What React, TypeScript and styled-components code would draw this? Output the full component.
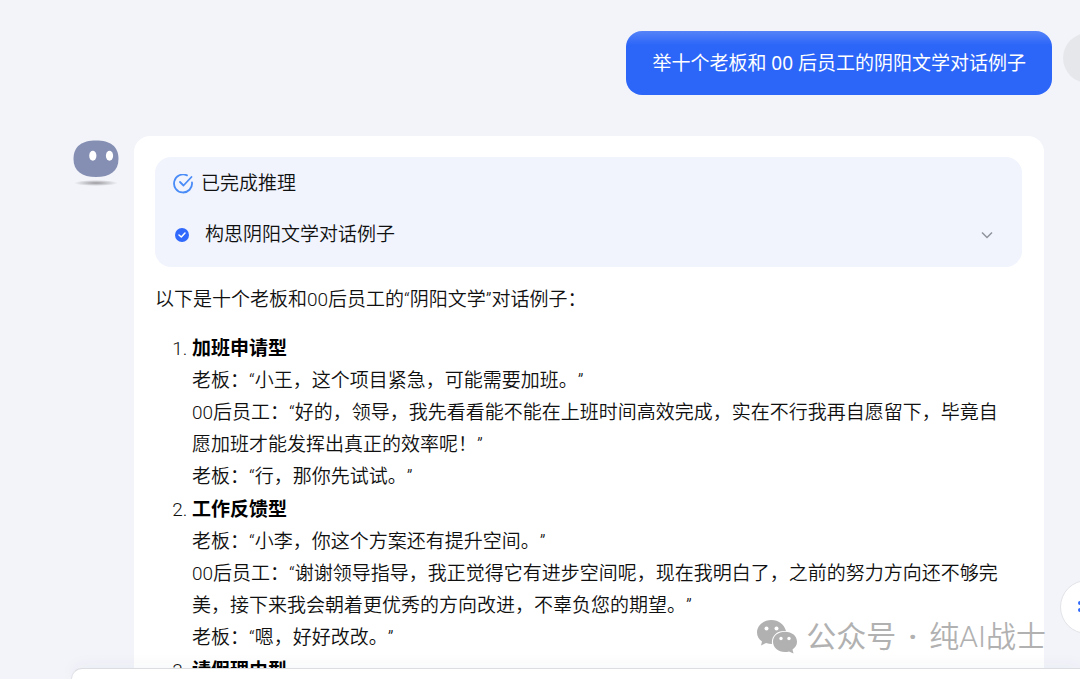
import React from "react";
import styled, { createGlobalStyle } from "styled-components";

const Global = createGlobalStyle`
  * { box-sizing: border-box; }
  body {
    margin: 0;
    background: #f3f4fa;
    color: #101010;
    font-family: Roboto, "Noto Sans CJK SC", sans-serif;
    font-size: 19px;
    font-weight: 350;
    line-height: 32px;
    text-spacing-trim: space-all;
  }
`;

const Page = styled.div`
  position: relative;
  display: flex;
  flex-direction: column;
  height: 100vh;
  overflow: hidden;
`;

const Conversation = styled.main`
  flex: 1;
  min-height: 0;
  overflow: hidden;
  display: flex;
  flex-direction: column;
  gap: 41px;
  padding-top: 31px;
`;

const UserRow = styled.div`
  display: flex;
  flex: none;
  justify-content: flex-end;
  gap: 11px;
  margin-right: -33px;
`;

const UserBubble = styled.div`
  padding: 16px 26px;
  border-radius: 16px;
  background: linear-gradient(#5583f8, #2c66f8 14px);
  color: #fff;
  font-family: "Noto Sans", "Noto Sans CJK SC", sans-serif;
  font-weight: 400;
`;

const UserAvatar = styled.div`
  width: 50px;
  height: 50px;
  margin-top: 2px;
  border-radius: 50%;
  background: #e6e7eb;
`;

const BotRow = styled.div`
  display: flex;
  flex: none;
  align-items: flex-start;
  gap: 14px;
  padding: 0 36px 0 72px;
`;

const BotAvatar = styled.svg`
  flex: none;
  width: 48px;
  height: 56px;
`;

const Card = styled.article`
  flex: 1;
  padding: 21px 22px 40px 21px;
  border-radius: 16px;
  background: #fff;
`;

const Reasoning = styled.section`
  display: flex;
  flex-direction: column;
  gap: 19px;
  padding: 11px 26px 16px 18px;
  border-radius: 16px;
  background: #f1f4fd;
`;

const Status = styled.div`
  display: flex;
  align-items: center;
  gap: 8px;
`;

const StepButton = styled.button`
  display: flex;
  align-items: center;
  gap: 16px;
  padding: 0 0 0 2px;
  border: 0;
  background: none;
  color: inherit;
  font: inherit;
  text-align: left;
`;

const StepName = styled.span`
  flex: 1;
`;

const Intro = styled.p`
  margin: 17px 0;
`;

const Examples = styled.ol`
  display: flex;
  flex-direction: column;
  gap: 1px;
  margin: 0;
  padding: 0 12px 0 37px;
`;

const Title = styled.strong`
  display: block;
  color: #000;
  font-weight: 700;
`;

const Line = styled.p`
  margin: 0;
`;

const Composer = styled.footer`
  flex: none;
  height: 11px;
  margin-left: 71px;
  border-top: 1px solid #dcdde1;
  border-left: 1px solid #e4e5ea;
  border-top-left-radius: 20px;
  background: #fff;
  box-shadow: 0 -2px 16px rgba(40, 50, 90, 0.05);
`;

const FloatButton = styled.button`
  position: absolute;
  right: -34px;
  bottom: 45px;
  display: flex;
  align-items: center;
  width: 54px;
  height: 54px;
  padding: 0 0 0 16px;
  border: 1px solid #e2e3e8;
  border-radius: 50%;
  background: #fff;
`;

const Watermark = styled.div`
  position: absolute;
  right: 34px;
  bottom: 22px;
  display: flex;
  align-items: center;
  gap: 8px;
  color: #b1b1b1;
  font-size: 30px;
  line-height: 40px;
`;

const Account = styled.span`
  font-weight: 400;
`;

const Dot = styled.span`
  width: 17px;
  text-align: center;
  font-weight: 700;
`;

const examples = [
  {
    title: "加班申请型",
    lines: [
      "老板：“小王，这个项目紧急，可能需要加班。”",
      "00后员工：“好的，领导，我先看看能不能在上班时间高效完成，实在不行我再自愿留下，毕竟自愿加班才能发挥出真正的效率呢！”",
      "老板：“行，那你先试试。”",
    ],
  },
  {
    title: "工作反馈型",
    lines: [
      "老板：“小李，你这个方案还有提升空间。”",
      "00后员工：“谢谢领导指导，我正觉得它有进步空间呢，现在我明白了，之前的努力方向还不够完美，接下来我会朝着更优秀的方向改进，不辜负您的期望。”",
      "老板：“嗯，好好改改。”",
    ],
  },
  { title: "请假理由型", lines: [] },
];

export default function App() {
  return (
    <>
      <Global />
      <Page>
        <Conversation>
          <UserRow>
            <UserBubble>举十个老板和 00 后员工的阴阳文学对话例子</UserBubble>
            <UserAvatar />
          </UserRow>
          <BotRow>
            <BotAvatar viewBox="0 0 48 56" aria-hidden="true">
              <defs>
                <radialGradient id="shade">
                  <stop offset="0" stopColor="#9a9a9e" />
                  <stop offset="1" stopColor="#9a9a9e" stopOpacity="0" />
                </radialGradient>
              </defs>
              <ellipse cx="24" cy="47" rx="22" ry="3" fill="url(#shade)" />
              <path d="M24 4.500C38 4.500 46.500 10 46.500 23C46.500 35 38 41 24 41C10 41 1.500 35 1.500 23C1.500 10 10 4.500 24 4.500Z" fill="#858fb3" />
              <ellipse cx="20.800" cy="19.800" rx="3.600" ry="5" fill="#fff" />
              <ellipse cx="37.500" cy="19.800" rx="3.600" ry="5" fill="#fff" />
            </BotAvatar>
            <Card>
              <Reasoning>
                <Status>
                  <svg width="20" height="20" viewBox="0 0 20 20" fill="none" stroke="#4a8cf7" strokeWidth="1.800" strokeLinecap="round" strokeLinejoin="round" aria-hidden="true">
                    <path d="M14 1.400A9 9 0 1 0 19 8.500" />
                    <path d="M7 8L10.500 11.500L18.500 3" />
                  </svg>
                  <span>已完成推理</span>
                </Status>
                <StepButton type="button">
                  <svg width="14" height="14" viewBox="0 0 14 14" fill="none" aria-hidden="true">
                    <circle cx="7" cy="7" r="7" fill="#3069fb" />
                    <path d="M4 7L6.300 9L10 5" stroke="#fff" strokeWidth="1.500" strokeLinecap="round" strokeLinejoin="round" />
                  </svg>
                  <StepName>构思阴阳文学对话例子</StepName>
                  <svg width="18" height="18" viewBox="0 0 18 18" fill="none" stroke="#8f939c" strokeWidth="1.500" aria-hidden="true">
                    <path d="M4 6.500L9 11.500L14 6.500" />
                  </svg>
                </StepButton>
              </Reasoning>
              <Intro>以下是十个老板和00后员工的“阴阳文学”对话例子：</Intro>
              <Examples>
                {examples.map((example) => (
                  <li key={example.title}>
                    <Title>{example.title}</Title>
                    {example.lines.map((line) => (
                      <Line key={line}>{line}</Line>
                    ))}
                  </li>
                ))}
              </Examples>
            </Card>
          </BotRow>
        </Conversation>
        <Composer />
        <FloatButton type="button" aria-label="工具">
          <svg width="20" height="20" viewBox="0 0 20 20" fill="#3069fb" aria-hidden="true">
            <circle cx="3" cy="6" r="2" />
            <circle cx="3" cy="13" r="2" />
          </svg>
        </FloatButton>
        <Watermark>
          <svg width="42" height="36" viewBox="0 0 42 36" aria-hidden="true">
            <path d="M15.500 1C7 1 1 6.500 1 13.500C1 17.500 3 20.500 6 22.500L5 26.500L10 24Q13 25 16 25C15 17 21 11 30 12C28 5 22.500 1 15.500 1Z" fill="#b1b1b1" />
            <path d="M29 12.800C22 12.800 17 17 17 22.800C17 28.500 22 33 29 33Q31 33 33 32.400L37.500 34.500L36.500 30.500C39.500 28.500 41 26 41 22.800C41 17 36 12.800 29 12.800Z" fill="#b1b1b1" />
            <g fill="#fff">
              <circle cx="10.500" cy="9.500" r="2" />
              <circle cx="20.500" cy="9.500" r="2" />
              <circle cx="25" cy="19.500" r="1.700" />
              <circle cx="33" cy="19.500" r="1.700" />
            </g>
          </svg>
          <Account>公众号</Account>
          <Dot>·</Dot>
          <span>纯AI战士</span>
        </Watermark>
      </Page>
    </>
  );
}
